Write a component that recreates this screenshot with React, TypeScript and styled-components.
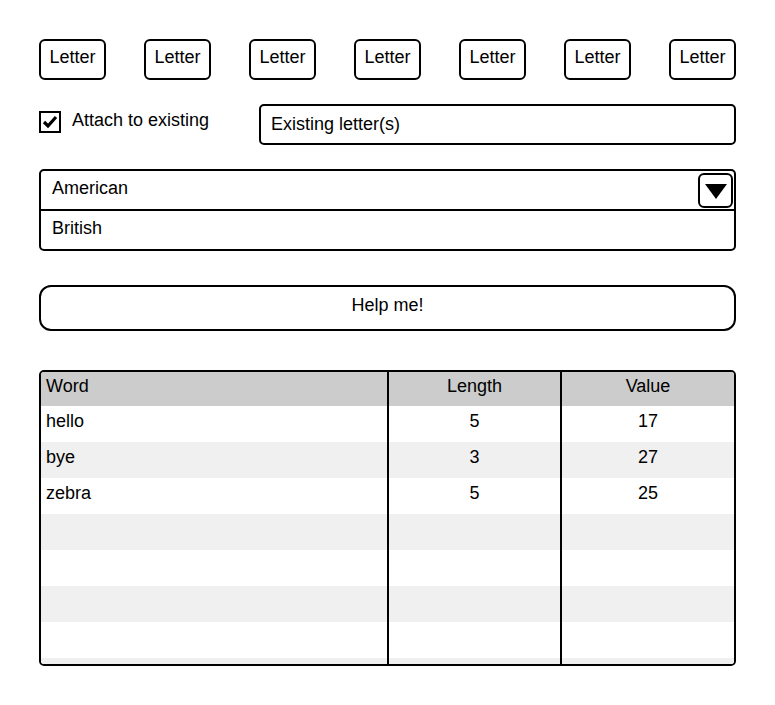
import React from "react";
import styled, { createGlobalStyle } from "styled-components";

const GlobalStyle = createGlobalStyle`
  html, body {
    margin: 0;
    padding: 0;
    background: #ffffff;
  }
  body {
    font-family: "Liberation Sans", Arial, sans-serif;
    font-size: 18px;
    color: #000;
  }
  * { box-sizing: border-box; }
`;

const Page = styled.div`
  width: 775px;
  padding: 39px 39px 0 39px;
  display: flex;
  flex-direction: column;
`;

const LetterRow = styled.div`
  display: flex;
  justify-content: space-between;
`;

const LetterButton = styled.div`
  width: 67px;
  height: 41px;
  border: 2px solid #000;
  border-radius: 6px;
  display: flex;
  align-items: center;
  justify-content: center;
  padding-bottom: 4px;
  font-size: 18px;
`;

const AttachRow = styled.div`
  margin-top: 24px;
  display: grid;
  grid-template-columns: 220px 1fr;
  align-items: start;
`;

const CheckGroup = styled.label`
  display: flex;
  align-items: center;
  gap: 11px;
  padding-top: 5px;
  font-size: 18px;
  line-height: 22px;
`;

const CheckBox = styled.span`
  width: 22px;
  height: 22px;
  border: 2px solid #000;
  display: flex;
  align-items: center;
  justify-content: center;
`;

const LabelText = styled.span`
  padding-bottom: 3px;
`;

const TextInput = styled.div`
  height: 41px;
  border: 2px solid #000;
  border-radius: 5px;
  display: flex;
  align-items: center;
  padding: 0 0 1px 10px;
  font-size: 18px;
`;

const ListBox = styled.div`
  margin-top: 24px;
  height: 82px;
  border: 2px solid #000;
  border-radius: 5px;
  display: flex;
  flex-direction: column;
`;

const SelectedOption = styled.div`
  height: 40px;
  border-bottom: 2px solid #000;
  display: flex;
  align-items: center;
  justify-content: space-between;
  padding: 0 1px 0 11px;
`;

const OptionText = styled.span`
  padding-bottom: 4px;
`;

const ArrowButton = styled.div`
  width: 35px;
  height: 35px;
  border: 2px solid #000;
  border-radius: 6px;
  display: flex;
  align-items: center;
  justify-content: center;
  margin-top: 1px;
`;

const Option = styled.div`
  flex: 1;
  display: flex;
  align-items: center;
  padding: 0 0 4px 11px;
`;

const HelpButton = styled.div`
  margin-top: 34px;
  height: 46px;
  border: 2px solid #000;
  border-radius: 12px;
  display: flex;
  align-items: center;
  justify-content: center;
  padding-bottom: 5px;
`;

const Table = styled.div`
  margin-top: 39px;
  height: 296px;
  border: 2px solid #000;
  border-radius: 5px;
  overflow: hidden;
  display: flex;
  flex-direction: column;
`;

const TableRow = styled.div<{ $bg: string; $h: number }>`
  display: grid;
  grid-template-columns: 346px 173px 174px;
  height: ${(p) => p.$h}px;
  flex-shrink: 0;
  background: ${(p) => p.$bg};
`;

const Cell = styled.div<{ $align: "left" | "center"; $first?: boolean; $lh: number }>`
  border-left: ${(p) => (p.$first ? "none" : "2px solid #000")};
  text-align: ${(p) => p.$align};
  padding-left: ${(p) => (p.$align === "left" ? "5px" : "0")};
  line-height: ${(p) => p.$lh}px;
  font-size: 18px;
`;

const rows: [string, string, string][] = [
  ["hello", "5", "17"],
  ["bye", "3", "27"],
  ["zebra", "5", "25"],
  ["", "", ""],
  ["", "", ""],
  ["", "", ""],
  ["", "", ""],
  ["", "", ""],
];

const CheckIcon = () => (
  <svg width="16" height="14" viewBox="0 0 16 14">
    <polyline
      points="2,7 6,11 14,2"
      fill="none"
      stroke="#000"
      strokeWidth="3.2"
      strokeLinecap="butt"
      strokeLinejoin="miter"
    />
  </svg>
);

const TriangleIcon = () => (
  <svg width="22" height="16" viewBox="0 0 22 16">
    <polygon points="0,1 22,1 11,16" fill="#000" />
  </svg>
);

export default function App() {
  return (
    <>
      <GlobalStyle />
      <Page>
        <LetterRow>
          {Array.from({ length: 7 }).map((_, i) => (
            <LetterButton key={i}>Letter</LetterButton>
          ))}
        </LetterRow>
        <AttachRow>
          <CheckGroup>
            <CheckBox>
              <CheckIcon />
            </CheckBox>
            <LabelText>Attach to existing</LabelText>
          </CheckGroup>
          <TextInput>Existing letter(s)</TextInput>
        </AttachRow>
        <ListBox>
          <SelectedOption>
            <OptionText>American</OptionText>
            <ArrowButton>
              <TriangleIcon />
            </ArrowButton>
          </SelectedOption>
          <Option>British</Option>
        </ListBox>
        <HelpButton>Help me!</HelpButton>
        <Table>
          <TableRow $bg="#cccccc" $h={34}>
            <Cell $align="left" $first $lh={28}>Word</Cell>
            <Cell $align="center" $lh={28}>Length</Cell>
            <Cell $align="center" $lh={28}>Value</Cell>
          </TableRow>
          {rows.map((r, i) => (
            <TableRow key={i} $bg={i % 2 === 0 ? "#ffffff" : "#f0f0f0"} $h={36}>
              <Cell $align="left" $first $lh={30}>{r[0]}</Cell>
              <Cell $align="center" $lh={30}>{r[1]}</Cell>
              <Cell $align="center" $lh={30}>{r[2]}</Cell>
            </TableRow>
          ))}
        </Table>
      </Page>
    </>
  );
}
